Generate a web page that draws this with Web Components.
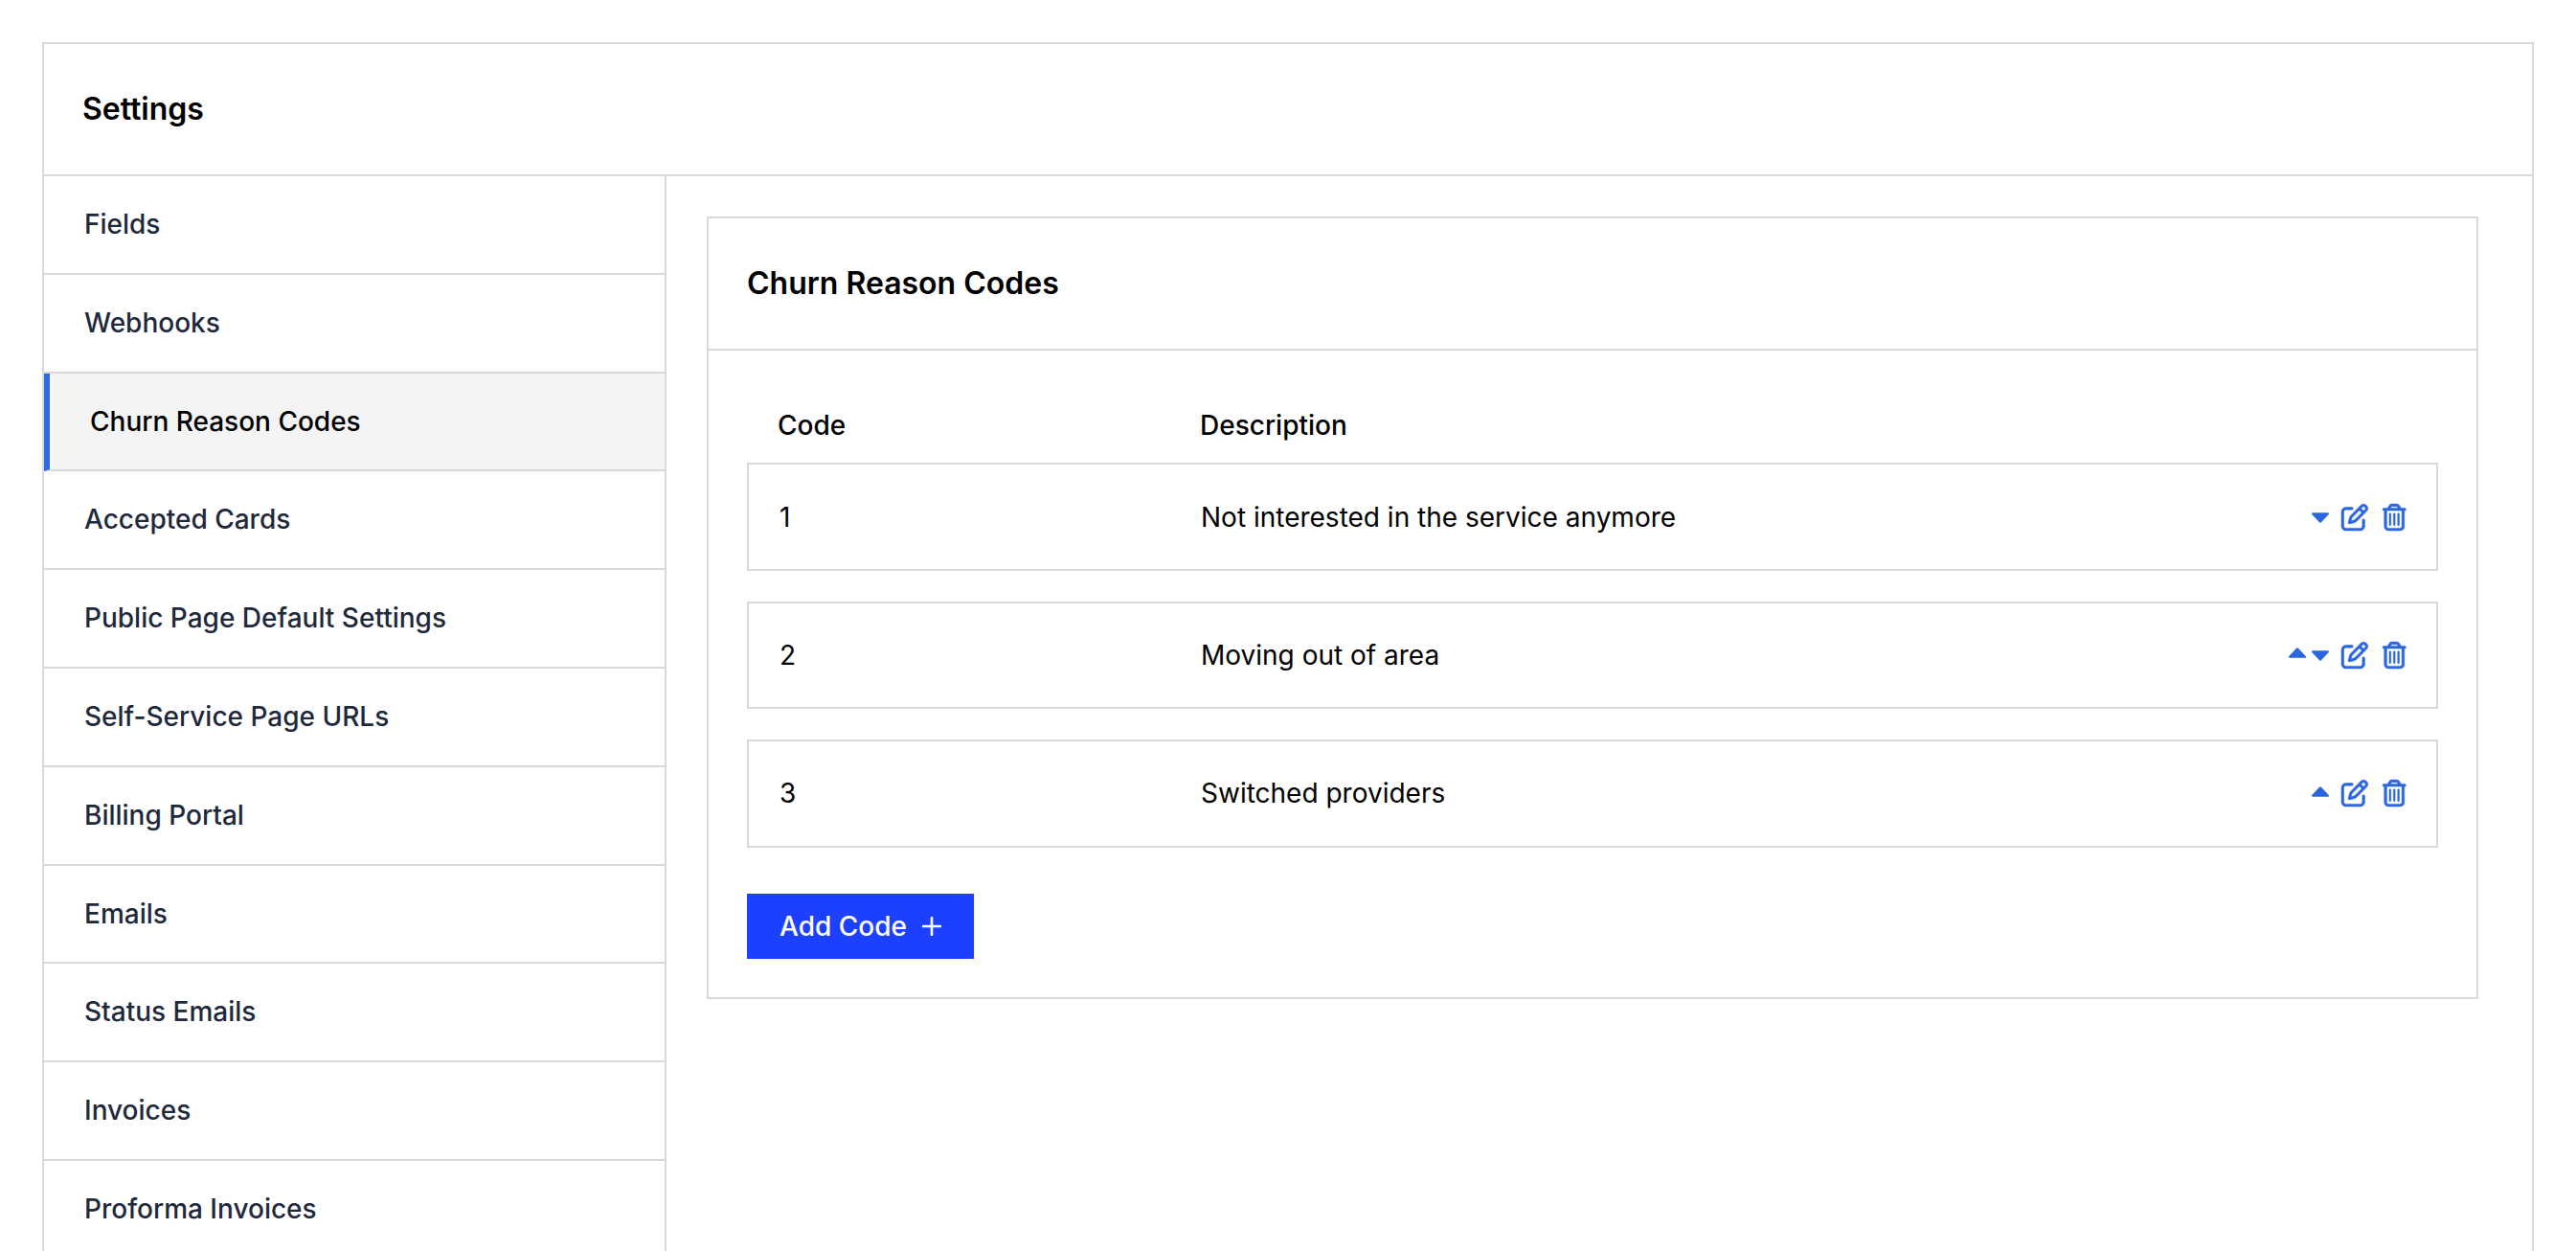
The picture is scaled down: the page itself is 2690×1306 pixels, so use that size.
<!doctype html>
<html lang="en"><head><meta charset="utf-8"><title>Settings</title>
<style>
html,body{margin:0;height:1306px;overflow:hidden;background:#fff}
body{padding:44px 44px 0;box-sizing:border-box;font-family:Inter,"Liberation Sans",sans-serif;color:#000}
</style></head><body>
<settings-shell heading="Settings">
  <nav-item slot="nav">Fields</nav-item>
  <nav-item slot="nav">Webhooks</nav-item>
  <nav-item slot="nav" active>Churn Reason Codes</nav-item>
  <nav-item slot="nav">Accepted Cards</nav-item>
  <nav-item slot="nav">Public Page Default Settings</nav-item>
  <nav-item slot="nav">Self-Service Page URLs</nav-item>
  <nav-item slot="nav">Billing Portal</nav-item>
  <nav-item slot="nav">Emails</nav-item>
  <nav-item slot="nav">Status Emails</nav-item>
  <nav-item slot="nav">Invoices</nav-item>
  <nav-item slot="nav">Proforma Invoices</nav-item>
  <codes-card heading="Churn Reason Codes">
    <code-row code="1" down>Not interested in the service anymore</code-row>
    <code-row code="2" up down>Moving out of area</code-row>
    <code-row code="3" up>Switched providers</code-row>
    <add-button slot="footer">Add Code</add-button>
  </codes-card>
</settings-shell>
<script>
const define=(name,html)=>{customElements.define(name,class extends HTMLElement{
  constructor(){super();const r=this.attachShadow({mode:'open'});r.innerHTML=html;}
  connectedCallback(){
    this.shadowRoot.querySelectorAll('[data-attr]').forEach(e=>{e.textContent=this.getAttribute(e.dataset.attr)||''});
    this.shadowRoot.querySelectorAll('[data-if]').forEach(e=>{if(!this.hasAttribute(e.dataset.if))e.remove()});
  }
})};

define('settings-shell',`<style>
:host{display:block;border:2px solid #d9d9d9;box-sizing:border-box;height:1400px}
header{height:138px;box-sizing:border-box;border-bottom:2px solid #d9d9d9;display:flex;align-items:center;padding:0 40px;font-size:32px;font-weight:600;line-height:40px}
.body{display:flex}
nav{width:650px;box-sizing:border-box;border-right:2px solid #d9d9d9;flex:none;display:flex;flex-direction:column;height:1262px}
main{flex:1;min-width:0;padding:42px 56px 0 42px}
</style><header data-attr="heading"></header><div class="body"><nav><slot name="nav"></slot></nav><main><slot></slot></main></div>`);

define('nav-item',`<style>
:host{display:flex;align-items:center;height:102.8px;flex:none;box-sizing:border-box;border-bottom:2px solid #d8d8dc;padding:0 0 .8px 42px;font-size:28px;font-weight:500;color:#1e293b;line-height:40px}
:host([active]){background:#f4f4f4;color:#000;border-left:6px solid #2d6ae3}
</style><slot></slot>`);

define('codes-card',`<style>
:host{display:block;border:2px solid #d9d9d9}
header{height:138px;box-sizing:border-box;border-bottom:2px solid #d9d9d9;display:flex;align-items:center;padding:0 40px;font-size:32px;font-weight:600;line-height:40px}
.body{padding:40px}
.head{display:grid;grid-template-columns:441px 1fr;height:77.4px;align-items:center;padding:0 32px 1.4px;font-size:28px;font-weight:500;line-height:40px;box-sizing:border-box}
.rows{display:flex;flex-direction:column;gap:32px}
.foot{margin-top:48px;display:flex}
</style><header data-attr="heading"></header><div class="body">
<div class="head"><span>Code</span><span>Description</span></div>
<div class="rows"><slot></slot></div>
<div class="foot"><slot name="footer"></slot></div></div>`);

const up='<svg width="18" height="11" viewBox="0 0 18 11"><path d="M9 1.2 17 9.8H1Z" fill="#2a66e0" stroke="#2a66e0" stroke-width="2" stroke-linejoin="round"/></svg>';
const down='<svg width="18" height="11" viewBox="0 0 18 11"><path d="M1 1.2H17L9 9.8Z" fill="#2a66e0" stroke="#2a66e0" stroke-width="2" stroke-linejoin="round"/></svg>';
define('code-row',`<style>
:host{display:grid;grid-template-columns:440px 1fr auto;align-items:center;height:112.4px;box-sizing:border-box;border:2px solid #d9d9d9;padding:0 32px;font-size:28px;font-weight:400;line-height:40px;color:#000}
.tools{display:flex;align-items:center}
.carets{display:flex;align-items:center;gap:6px;margin-right:13px}
.carets svg{display:block}
.u{margin-top:-4px}
.d{margin-top:1px}
.edit{margin-right:15px;display:block}
.trash{display:block}
svg.edit path,svg.trash path{fill:#2a66e0;stroke:#2a66e0;stroke-width:9}
svg.edit,svg.trash{overflow:visible}
</style><span data-attr="code"></span><span><slot></slot></span><span class="tools"><span class="carets"><span class="u" data-if="up">${up}</span><span class="d" data-if="down">${down}</span></span>
<svg class="edit" width="28" height="28" viewBox="0 0 512 512"><path d="M441 58.9L453.1 71c9.4 9.4 9.4 24.6 0 33.9L424 134.1 377.9 88 407 58.9c9.4-9.4 24.6-9.4 33.9 0zM209.8 256.2L344 121.9 390.1 168 255.8 302.2c-2.9 2.9-6.5 5-10.4 6.1l-58.5 16.7 16.7-58.5c1.1-3.9 3.2-7.5 6.1-10.4zM373.1 25L175.8 222.2c-8.7 8.7-15 19.4-18.3 31.1l-28.6 100c-2.4 8.4-.1 17.4 6.1 23.6s15.2 8.5 23.6 6.1l100-28.6c11.8-3.4 22.5-9.7 31.1-18.3L487 138.9c28.1-28.1 28.1-73.7 0-101.8L474.9 25C446.8-3.1 401.2-3.1 373.1 25zM88 64C39.4 64 0 103.4 0 152V424c0 48.6 39.4 88 88 88H360c48.6 0 88-39.4 88-88V312c0-13.3-10.7-24-24-24s-24 10.7-24 24V424c0 22.1-17.9 40-40 40H88c-22.1 0-40-17.9-40-40V152c0-22.1 17.9-40 40-40H200c13.3 0 24-10.7 24-24s-10.7-24-24-24H88z"/></svg>
<svg class="trash" width="24.5" height="28" viewBox="0 0 448 512"><path d="M170.5 51.6L151.5 80h145l-19-28.4c-1.5-2.2-4-3.6-6.7-3.6H177.1c-2.7 0-5.2 1.3-6.7 3.6zm147-26.6L354.2 80H368h48 8c13.3 0 24 10.7 24 24s-10.7 24-24 24h-8V432c0 44.2-35.8 80-80 80H112c-44.2 0-80-35.8-80-80V128H24c-13.3 0-24-10.7-24-24S10.7 80 24 80h8H80 93.8l36.7-55.1C140.9 9.4 158.4 0 177.1 0h93.7c18.7 0 36.2 9.4 46.6 24.9zM80 128V432c0 17.7 14.3 32 32 32H336c17.7 0 32-14.3 32-32V128H80zm80 64V400c0 8.8-7.2 16-16 16s-16-7.2-16-16V192c0-8.8 7.2-16 16-16s16 7.2 16 16zm80 0V400c0 8.8-7.2 16-16 16s-16-7.2-16-16V192c0-8.8 7.2-16 16-16s16 7.2 16 16zm80 0V400c0 8.8-7.2 16-16 16s-16-7.2-16-16V192c0-8.8 7.2-16 16-16s16 7.2 16 16z"/></svg></span>`);

define('add-button',`<style>
:host{display:inline-flex;align-items:center;height:68px;box-sizing:border-box;width:237px;padding:0 34px;justify-content:space-between;background:#1c40fd;color:#fff;font-size:28px;font-weight:500;line-height:40px}
svg{display:block}
</style><slot></slot><svg width="20" height="20" viewBox="0 0 20 20"><path d="M10 1V19M1 10H19" stroke="#fff" stroke-width="2.6" stroke-linecap="round" fill="none"/></svg>`);
</script></body></html>
